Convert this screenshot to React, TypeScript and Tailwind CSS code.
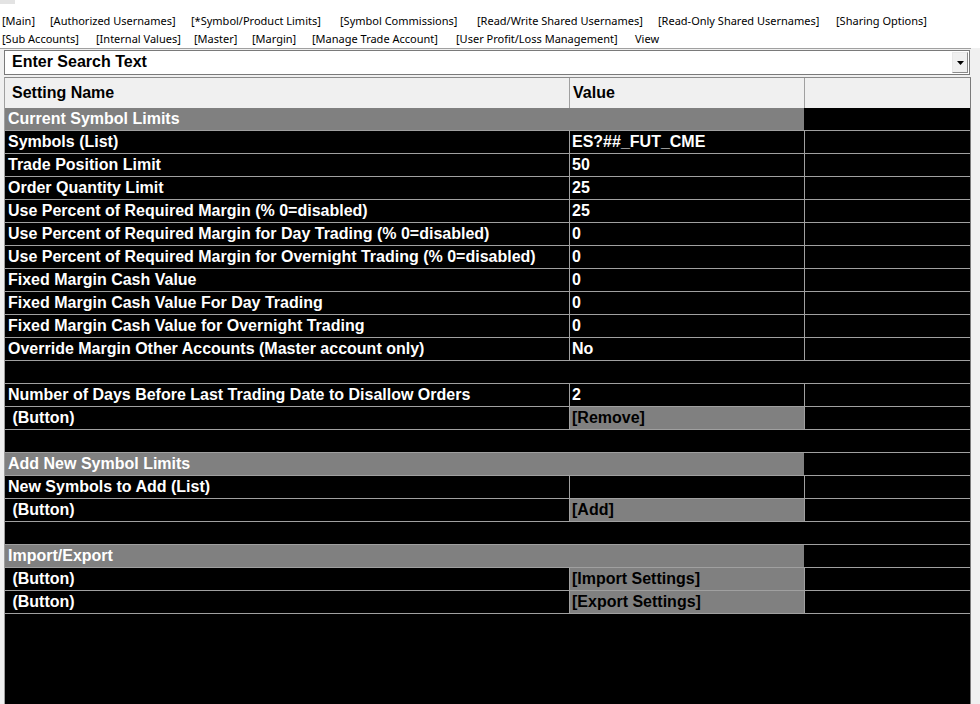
import React from "react";

type Row =
  | { kind: "section"; label: string }
  | { kind: "blank" }
  | { kind: "value"; name: string; value: string }
  | { kind: "button"; value: string };

const navTop = [
  { label: "[Main]", w: "w-[48px]" },
  { label: "[Authorized Usernames]", w: "w-[141px]" },
  { label: "[*Symbol/Product Limits]", w: "w-[149px]" },
  { label: "[Symbol Commissions]", w: "w-[137px]" },
  { label: "[Read/Write Shared Usernames]", w: "w-[181px]" },
  { label: "[Read-Only Shared Usernames]", w: "w-[178px]" },
  { label: "[Sharing Options]", w: "w-auto" },
];

const navBottom = [
  { label: "[Sub Accounts]", w: "w-[94px]" },
  { label: "[Internal Values]", w: "w-[98px]" },
  { label: "[Master]", w: "w-[58px]" },
  { label: "[Margin]", w: "w-[60px]" },
  { label: "[Manage Trade Account]", w: "w-[144px]" },
  { label: "[User Profit/Loss Management]", w: "w-[179px]" },
  { label: "View", w: "w-auto" },
];

const rows: Row[] = [
  { kind: "section", label: "Current Symbol Limits" },
  { kind: "value", name: "Symbols (List)", value: "ES?##_FUT_CME" },
  { kind: "value", name: "Trade Position Limit", value: "50" },
  { kind: "value", name: "Order Quantity Limit", value: "25" },
  { kind: "value", name: "Use Percent of Required Margin (% 0=disabled)", value: "25" },
  { kind: "value", name: "Use Percent of Required Margin for Day Trading (% 0=disabled)", value: "0" },
  { kind: "value", name: "Use Percent of Required Margin for Overnight Trading (% 0=disabled)", value: "0" },
  { kind: "value", name: "Fixed Margin Cash Value", value: "0" },
  { kind: "value", name: "Fixed Margin Cash Value For Day Trading", value: "0" },
  { kind: "value", name: "Fixed Margin Cash Value for Overnight Trading", value: "0" },
  { kind: "value", name: "Override Margin Other Accounts (Master account only)", value: "No" },
  { kind: "blank" },
  { kind: "value", name: "Number of Days Before Last Trading Date to Disallow Orders", value: "2" },
  { kind: "button", value: "[Remove]" },
  { kind: "blank" },
  { kind: "section", label: "Add New Symbol Limits" },
  { kind: "value", name: "New Symbols to Add (List)", value: "" },
  { kind: "button", value: "[Add]" },
  { kind: "blank" },
  { kind: "section", label: "Import/Export" },
  { kind: "button", value: "[Import Settings]" },
  { kind: "button", value: "[Export Settings]" },
];

function NavLine({ items }: { items: { label: string; w: string }[] }) {
  return (
    <div className="flex h-[18px] items-center pl-[2px] leading-[18px]">
      {items.map((it) => (
        <span key={it.label} className={`${it.w} shrink-0 whitespace-nowrap`}>
          {it.label}
        </span>
      ))}
    </div>
  );
}

function GridRow({ row }: { row: Row }) {
  if (row.kind === "blank") {
    return <div className="h-[23px] shrink-0 border-b border-[#a0a0a0] bg-black" />;
  }
  if (row.kind === "section") {
    return (
      <div className="flex h-[23px] shrink-0 border-b border-[#a0a0a0]">
        <div className="flex w-[799px] items-center bg-[#808080] pl-[3px] text-white">{row.label}</div>
        <div className="flex-1 bg-black" />
      </div>
    );
  }
  const isButton = row.kind === "button";
  return (
    <div className="flex h-[23px] shrink-0 border-b border-[#a0a0a0] bg-black">
      <div className="flex w-[565px] items-center whitespace-pre border-r border-[#a0a0a0] pl-[3px] text-white">
        {isButton ? " (Button)" : row.name}
      </div>
      <div
        className={
          isButton
            ? "flex w-[235px] items-center border-r border-[#a0a0a0] bg-[#808080] pl-[2px] text-black"
            : "flex w-[235px] items-center border-r border-[#a0a0a0] pl-[2px] text-white"
        }
      >
        {row.value}
      </div>
      <div className="flex-1" />
    </div>
  );
}

export default function App() {
  return (
    <div className="flex h-[704px] w-[980px] flex-col overflow-hidden bg-white">
      {/* tab links */}
      <div className="shrink-0 text-[11px] text-black" style={{ fontFamily: '"Noto Sans", "Liberation Sans", sans-serif' }}>
        <div className="h-[4px] w-[15px] bg-[#e3e3e3]" />
        <div className="pt-[8px]">
          <NavLine items={navTop} />
          <NavLine items={navBottom} />
        </div>
      </div>

      <div className="flex min-h-0 flex-1 bg-[#f0f0f0]">
        <div
          className="flex w-[971px] flex-col border-t border-[#a0a0a0] font-bold text-[16px]"
          style={{ fontFamily: '"Liberation Sans", Arial, sans-serif' }}
        >
          {/* search box */}
          <div className="ml-[4px] mt-[1px] flex h-[25px] w-[966px] shrink-0 border border-[#7a7a7a] bg-white">
            <div className="flex flex-1 items-center pl-[7px] pb-[2px] text-black">Enter Search Text</div>
            <div className="my-[1px] mr-[1px] flex w-[16px] items-center justify-center border border-t-[#e8e8e8] border-l-[#e8e8e8] border-b-[#8a8a8a] border-r-[#8a8a8a] bg-[#f0f0f0]">
              <svg width="7" height="4" viewBox="0 0 7 4">
                <path d="M0 0h7L3.5 4z" fill="#000" />
              </svg>
            </div>
          </div>

          {/* settings grid */}
          <div className="ml-[4px] mt-[2px] flex min-h-0 flex-1 flex-col border-l border-r border-t border-l-[#a0a0a0] border-r-[#7a7a7a] border-t-[#8a8a8a] bg-black">
            <div className="flex h-[30px] shrink-0 bg-[#f0f0f0] text-black">
              <div className="flex w-[565px] items-center border-r border-[#a0a0a0] pl-[7px]">Setting Name</div>
              <div className="flex w-[235px] items-center border-r border-[#a0a0a0] pl-[3px]">Value</div>
              <div className="flex-1" />
            </div>
            {rows.map((r, i) => (
              <GridRow key={i} row={r} />
            ))}
          </div>
        </div>
        <div className="flex-1" />
      </div>
    </div>
  );
}
